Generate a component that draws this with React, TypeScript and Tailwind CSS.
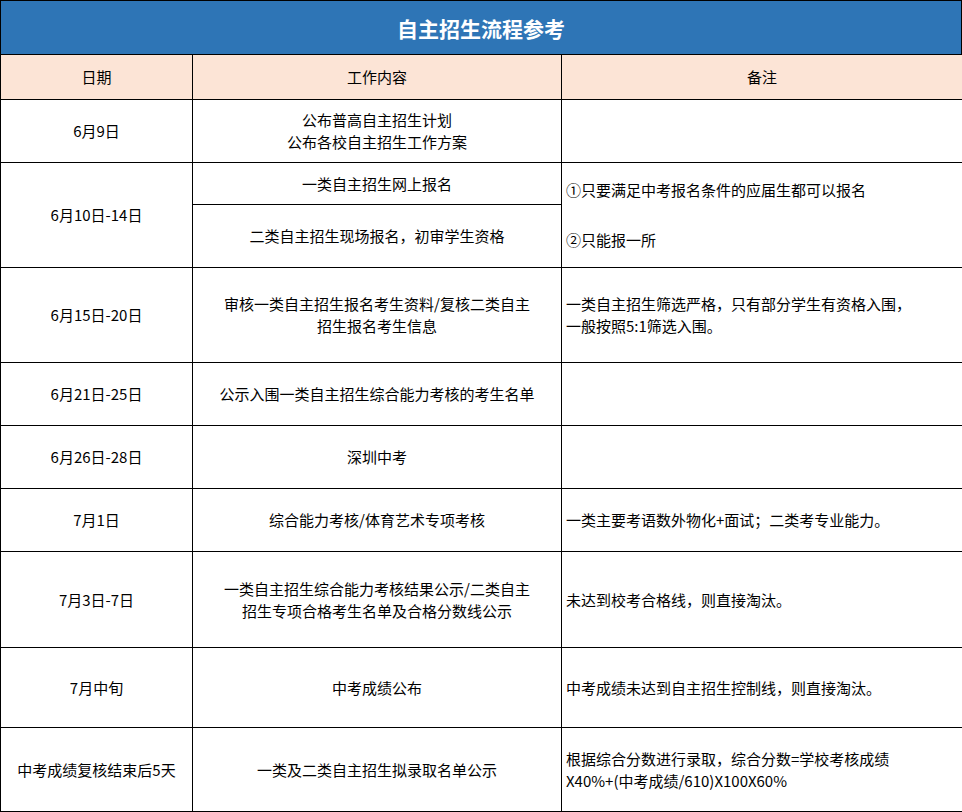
export default function App() {
  const c = "border-r border-b border-black flex items-center";
  const ctr = c + " justify-center text-center";
  const lft = c + " pl-[4px] text-left";
  return (
    <div className="w-[962px] h-[812px] overflow-hidden bg-white text-[15px] leading-[22px] text-black" style={{ fontFamily: '"Noto Sans CJK SC", "Noto Sans", sans-serif' }}>
      <div className="h-[55px] bg-[#2e75b6] border border-black flex items-center justify-center text-white text-[21px] font-bold">自主招生流程参考</div>
      <div className="grid grid-cols-[192px_369px_401px] grid-rows-[45px_63px_42px_63px_95px_63px_63px_63px_96px_80px_84px] border-l border-black">
        <div className={ctr + " bg-[#fce4d6]"}>日期</div>
        <div className={ctr + " bg-[#fce4d6]"}>工作内容</div>
        <div className={ctr + " bg-[#fce4d6]"}>备注</div>

        <div className={ctr}>6月9日</div>
        <div className={ctr}>公布普高自主招生计划<br />公布各校自主招生工作方案</div>
        <div className={c}></div>

        <div className={ctr + " row-span-2"}>6月10日-14日</div>
        <div className={ctr}>一类自主招生网上报名</div>
        <div className={lft + " row-span-2 flex-col !items-start justify-center gap-[28px]"}>
          <div>①只要满足中考报名条件的应届生都可以报名</div>
          <div>②只能报一所</div>
        </div>
        <div className={ctr}>二类自主招生现场报名，初审学生资格</div>

        <div className={ctr}>6月15日-20日</div>
        <div className={ctr}>审核一类自主招生报名考生资料/复核二类自主<br />招生报名考生信息</div>
        <div className={lft}>一类自主招生筛选严格，只有部分学生有资格入围，<br />一般按照5:1筛选入围。</div>

        <div className={ctr}>6月21日-25日</div>
        <div className={ctr}>公示入围一类自主招生综合能力考核的考生名单</div>
        <div className={c}></div>

        <div className={ctr}>6月26日-28日</div>
        <div className={ctr}>深圳中考</div>
        <div className={c}></div>

        <div className={ctr}>7月1日</div>
        <div className={ctr}>综合能力考核/体育艺术专项考核</div>
        <div className={lft}>一类主要考语数外物化+面试；二类考专业能力。</div>

        <div className={ctr}>7月3日-7日</div>
        <div className={ctr}>一类自主招生综合能力考核结果公示/二类自主<br />招生专项合格考生名单及合格分数线公示</div>
        <div className={lft}>未达到校考合格线，则直接淘汰。</div>

        <div className={ctr}>7月中旬</div>
        <div className={ctr}>中考成绩公布</div>
        <div className={lft}>中考成绩未达到自主招生控制线，则直接淘汰。</div>

        <div className={ctr}>中考成绩复核结束后5天</div>
        <div className={ctr}>一类及二类自主招生拟录取名单公示</div>
        <div className={lft}>根据综合分数进行录取，综合分数=学校考核成绩<br />X40%+(中考成绩/610)X100X60%</div>
      </div>
    </div>
  );
}
